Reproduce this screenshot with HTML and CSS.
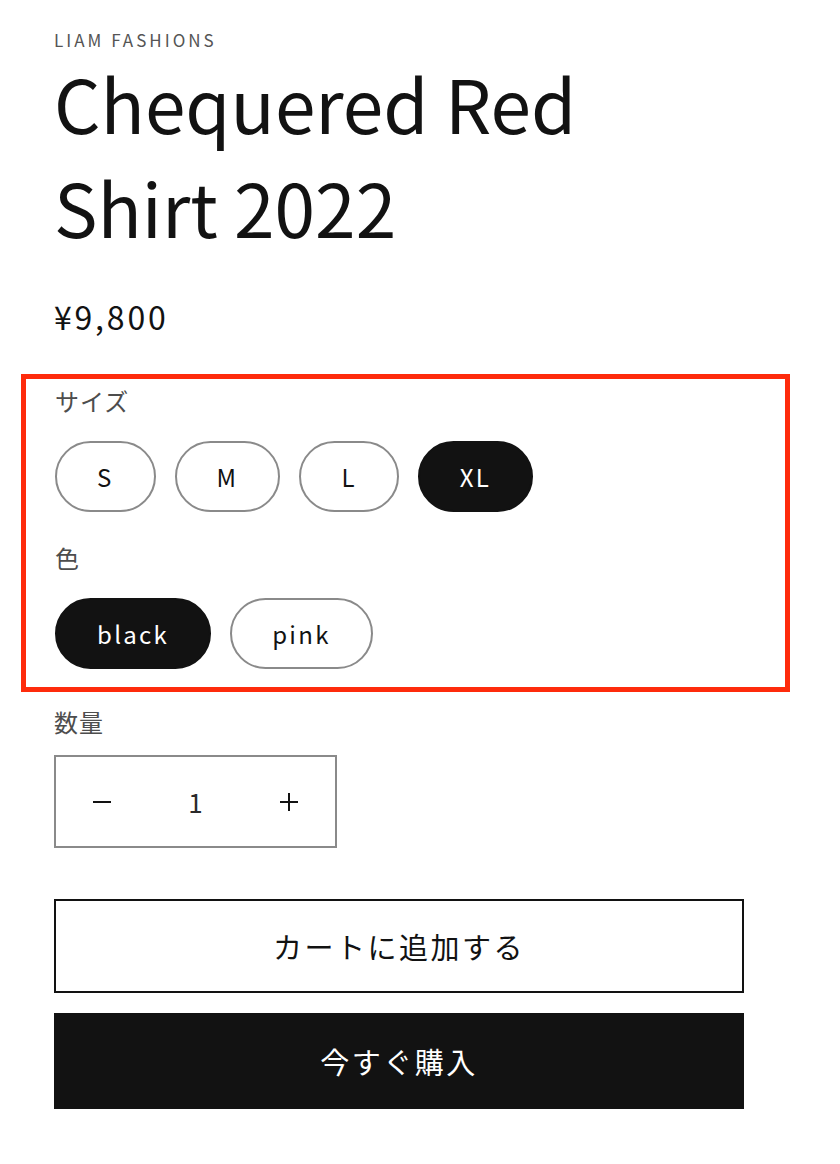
FILE: index.html
```html
<!DOCTYPE html>
<html lang="ja">
<head>
    <meta charset="UTF-8">
    <meta name="viewport" content="width=device-width, initial-scale=1.0">
    <title>Chequered Red Shirt 2022</title>
    <link rel="stylesheet" href="styles.css">
</head>
<body>
    <div class="product">
        <p class="vendor">LIAM FASHIONS</p>
        <h1 class="title">Chequered Red Shirt 2022</h1>
        <div class="price">¥9,800</div>

        <div class="variants">
            <fieldset class="option">
                <legend>サイズ</legend>
                <div class="pills">
                    <input type="radio" id="size-s" name="size" value="S">
                    <label for="size-s">S</label>
                    <input type="radio" id="size-m" name="size" value="M">
                    <label for="size-m">M</label>
                    <input type="radio" id="size-l" name="size" value="L">
                    <label for="size-l">L</label>
                    <input type="radio" id="size-xl" name="size" value="XL" checked>
                    <label for="size-xl">XL</label>
                </div>
            </fieldset>
            <fieldset class="option">
                <legend>色</legend>
                <div class="pills">
                    <input type="radio" id="color-black" name="color" value="black" checked>
                    <label for="color-black">black</label>
                    <input type="radio" id="color-pink" name="color" value="pink">
                    <label for="color-pink">pink</label>
                </div>
            </fieldset>
        </div>

        <label class="field-label" for="quantity">数量</label>
        <div class="quantity">
            <button type="button" class="qty-btn" aria-label="減らす">
                <svg width="18" height="2" viewBox="0 0 18 2"><rect width="18" height="2" fill="#121212"/></svg>
            </button>
            <input type="number" id="quantity" class="qty-input" value="1" min="1">
            <button type="button" class="qty-btn" aria-label="増やす">
                <svg width="18" height="18" viewBox="0 0 18 18"><rect y="8" width="18" height="2" fill="#121212"/><rect x="8" width="2" height="18" fill="#121212"/></svg>
            </button>
        </div>

        <div class="actions">
            <button type="button" class="btn btn-secondary">カートに追加する</button>
            <button type="button" class="btn btn-primary">今すぐ購入</button>
        </div>
    </div>
</body>
</html>
```

FILE: styles.css
```css
body {
    margin: 0;
    font-family: "Noto Sans CJK JP", "Noto Sans", sans-serif;
    color: #121212;
    background-color: #fff;
}
.product {
    width: 690px;
    margin-left: 54px;
    padding-top: 31px;
}
.vendor {
    margin: 0;
    font-size: 17px;
    line-height: 18px;
    letter-spacing: 3px;
    color: #555;
}
.title {
    max-width: 620px;
    margin: 1px 0 0;
    font-size: 73px;
    line-height: 104px;
    font-weight: 400;
}
.price {
    margin-top: 38px;
    font-size: 32px;
    line-height: 40px;
    letter-spacing: 2.8px;
}

/* annotated block round the variant pickers */
.variants {
    margin: 38px -46px 0 -33px;
    padding: 7px 0 18px 29px;
    border: 5px solid #fe2b0c;
}
.option {
    margin: 0;
    padding: 0;
    border: none;
}
.option + .option {
    margin-top: 31px;
}
.option legend,
.field-label {
    display: block;
    padding: 0;
    font-size: 24px;
    line-height: 30px;
    letter-spacing: 1px;
    color: #4d4d4d;
}
.pills {
    display: flex;
    gap: 19px;
    margin-top: 25px;
}
.pills input {
    display: none;
}
.pills label {
    display: flex;
    align-items: center;
    height: 71px;
    padding: 0 40px;
    box-sizing: border-box;
    border: 2px solid #8a8a8a;
    border-radius: 40px;
    font-size: 24px;
    letter-spacing: 2.3px;
    cursor: pointer;
}
.pills input:checked + label {
    background-color: #121212;
    border-color: #121212;
    color: #fff;
}

.field-label {
    margin-top: 15px;
}
.quantity {
    display: flex;
    width: 283px;
    height: 93px;
    margin-top: 18px;
    box-sizing: border-box;
    border: 2px solid #8a8a8a;
}
.qty-btn {
    display: flex;
    align-items: center;
    justify-content: center;
    width: 92px;
    padding: 0;
    border: none;
    background: none;
    cursor: pointer;
}
.qty-input {
    flex: 1;
    min-width: 0;
    padding: 0;
    border: none;
    text-align: center;
    font-family: inherit;
    font-size: 26px;
    color: #2a2a2a;
    -moz-appearance: textfield;
}
.qty-input::-webkit-inner-spin-button,
.qty-input::-webkit-outer-spin-button {
    -webkit-appearance: none;
    margin: 0;
}

.actions {
    display: flex;
    flex-direction: column;
    gap: 20px;
    margin-top: 51px;
}
.btn {
    width: 100%;
    box-sizing: border-box;
    font-family: inherit;
    font-size: 29px;
    letter-spacing: 2.5px;
    cursor: pointer;
}
.btn-secondary {
    height: 94px;
    background-color: #fff;
    border: 2px solid #121212;
    color: #121212;
}
.btn-primary {
    height: 96px;
    background-color: #121212;
    border: none;
    color: #fff;
}
```
